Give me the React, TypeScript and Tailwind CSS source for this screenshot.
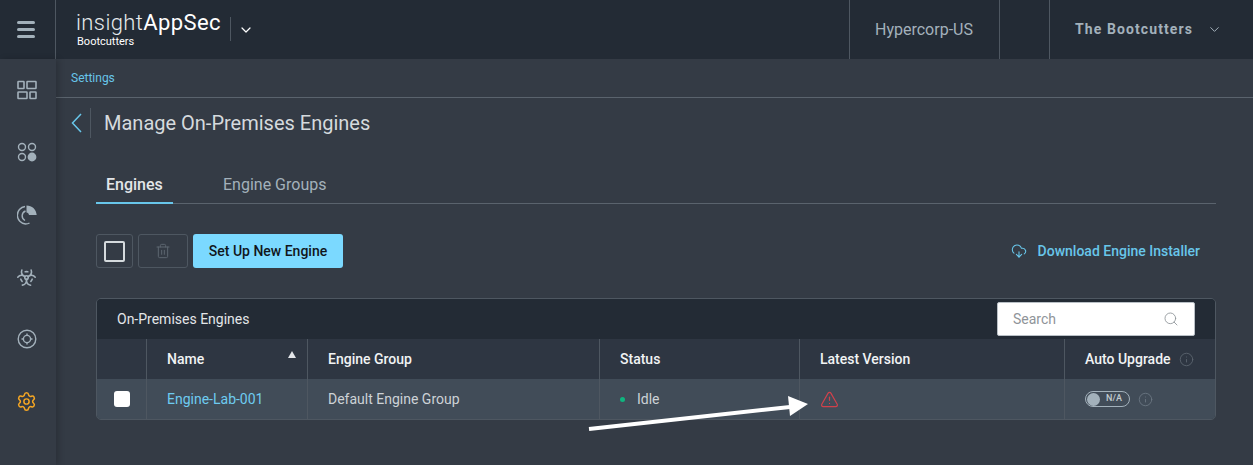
import { ChevronDown, Info, Search, Trash2, TriangleAlert, CloudDownload, Settings, Biohazard } from 'lucide-react';

const columnBorder = 'border-l border-[#4e5761]';

function DashboardIcon() {
  return (
    <svg width="20" height="20" viewBox="0 0 20 20" fill="none" stroke="#a3b1bb" strokeWidth="1.6">
      <rect x="1" y="1.5" width="6" height="7" rx="0.5" />
      <rect x="10" y="1.5" width="9" height="7" rx="0.5" />
      <rect x="1" y="12" width="9" height="6.5" rx="0.5" />
      <rect x="13" y="12" width="6" height="6.5" rx="0.5" />
    </svg>
  );
}

function DotsIcon() {
  return (
    <svg width="20" height="20" viewBox="0 0 20 20" fill="none" stroke="#a3b1bb" strokeWidth="1.4">
      <circle cx="5" cy="5" r="3.5" />
      <circle cx="15" cy="5" r="3.5" />
      <circle cx="5" cy="15" r="3.5" />
      <circle cx="15" cy="15" r="3.7" fill="#a3b1bb" />
    </svg>
  );
}

function RadarIcon() {
  return (
    <svg width="20" height="20" viewBox="0 0 20 20" fill="none" stroke="#a3b1bb" strokeWidth="1.4">
      <path d="M8 1.500a8.800 8.800 0 0 0 .5 17.500c1.500 0 3-.4 4-1" />
      <path d="M8.500 6a5.200 5.200 0 0 0-.5 9.500" />
      <path d="M9.500 0.500c5.500 0 9.700 3.800 10.200 9.500H12c-.3-1.300-1.100-2.200-2.500-2.500z" fill="#a3b1bb" stroke="none" />
    </svg>
  );
}

function TargetIcon() {
  return (
    <svg width="20" height="20" viewBox="0 0 20 20" fill="none" stroke="#a3b1bb" strokeWidth="1.4">
      <circle cx="10" cy="10" r="8.800" />
      <circle cx="10" cy="10" r="3.600" />
      <path d="M10 4.500v2M10 13.500v2M4.500 10h2M13.500 10h2" />
    </svg>
  );
}

function BackChevron() {
  return (
    <svg width="11" height="20" viewBox="0 0 11 20" fill="none" stroke="#68c6ea" strokeWidth="1.5">
      <path d="M10 1L1.500 10L10 19" />
    </svg>
  );
}

function SideIcon({ children }: { children: React.ReactNode }) {
  return <div className="h-[62.3px] flex items-center justify-center pr-[3px]">{children}</div>;
}

function Sidebar() {
  return (
    <aside className="w-[56px] shrink-0 bg-[#343b45] flex flex-col shadow-[3px_0_6px_rgba(0,0,0,0.18)] z-10">
      <SideIcon><DashboardIcon /></SideIcon>
      <SideIcon><DotsIcon /></SideIcon>
      <SideIcon><RadarIcon /></SideIcon>
      <SideIcon><Biohazard size={21} color="#a3b1bb" strokeWidth={1.8} /></SideIcon>
      <SideIcon><TargetIcon /></SideIcon>
      <SideIcon><Settings size={21} color="#f5a623" strokeWidth={1.7} /></SideIcon>
    </aside>
  );
}

function TopBar() {
  return (
    <header className="h-[59px] bg-[#232b35] flex items-stretch">
      <div className="w-[56px] shrink-0 border-r border-[#4e5761] flex flex-col items-center justify-center gap-[4px] pr-[3px]">
        <span className="w-[18px] h-[3px] rounded-sm bg-[#a3b1bb]" />
        <span className="w-[18px] h-[3px] rounded-sm bg-[#a3b1bb]" />
        <span className="w-[18px] h-[3px] rounded-sm bg-[#a3b1bb]" />
      </div>
      <div className="flex-1 flex items-center pl-[20px]">
        <div className="w-[154px] -mt-[2px]">
          <div className="text-[22px] leading-[26px] tracking-[0.4px] text-[#e6eaed] font-light">
            insight<span className="font-normal text-white">AppSec</span>
          </div>
          <div className="text-[11px] leading-[12px] pl-[1px] text-white">Bootcutters</div>
        </div>
        <div className="w-px h-[24px] bg-[#4e5761] -mt-[2px]" />
        <ChevronDown size={16} color="#fff" strokeWidth={1.8} className="ml-[7px]" />
      </div>
      <div className="w-[150px] border-l border-[#4e5761] flex items-center pl-[25px] text-[16px] text-[#a3b1bb]">Hypercorp-US</div>
      <div className="w-[50px] border-l border-[#4e5761]" />
      <div className="w-[204px] border-l border-[#4e5761] flex items-center pl-[25px] text-[#a3b1bb]">
        <span className="text-[14px] font-bold tracking-[1.1px]">The Bootcutters</span>
        <ChevronDown size={15} strokeWidth={1.6} className="ml-[14px]" />
      </div>
    </header>
  );
}

function Toolbar() {
  return (
    <div className="mt-[30px] flex items-center h-[34px]">
      <div className="w-[37px] h-[34px] rounded-[3px] border border-[#4e5761] flex items-center justify-center">
        <span className="w-[21px] h-[21px] rounded-[2px] border-2 border-[#d5dadd]" />
      </div>
      <div className="ml-[5px] w-[50px] h-[34px] rounded-[3px] border border-[#4e5761] flex items-center justify-center">
        <Trash2 size={16} color="#5d6670" strokeWidth={1.5} />
      </div>
      <button className="ml-[5px] w-[150px] h-[34px] rounded-[3px] bg-[#7bd9ff] text-[#11161c] text-[14px] font-medium">
        Set Up New Engine
      </button>
      <div className="ml-auto mr-[16px] flex items-center text-[14px] font-medium text-[#68c6ea]">
        <CloudDownload size={16} strokeWidth={1.6} />
        <span className="ml-[11px]">Download Engine Installer</span>
      </div>
    </div>
  );
}

function EnginesTable() {
  return (
    <div className="mt-[30px] rounded-[5px] border border-[#4e5761] overflow-hidden text-[14px]">
      <div className="h-[40px] bg-[#232b35] flex items-center pl-[20px] pr-[20px] justify-between text-[#e3e6e9]">
        <span>On-Premises Engines</span>
        <div className="w-[198px] h-[34px] -mt-[1px] bg-white rounded-[2px] border border-[#b9c0c6] flex items-center justify-between pl-[15px] pr-[15px] text-[#8f9499]">
          <span className="pt-[1px]">Search</span>
          <Search size={16} strokeWidth={1.3} color="#8f9499" />
        </div>
      </div>
      <div className="grid grid-cols-[49px_161px_292px_200px_265px_1fr]">
        <div className="h-[40px] bg-[#2e3642]" />
        <div className={`h-[40px] bg-[#2e3642] ${columnBorder} pl-[20px] flex items-center font-medium text-[#f1f3f4] relative`}>
          Name
          <span className="absolute right-[11px] top-[12px] w-0 h-0 border-x-[4px] border-x-transparent border-b-[7px] border-b-[#e3e6e9]" />
        </div>
        <div className={`h-[40px] bg-[#2e3642] ${columnBorder} pl-[20px] flex items-center font-medium text-[#f1f3f4]`}>Engine Group</div>
        <div className={`h-[40px] bg-[#2e3642] ${columnBorder} pl-[20px] flex items-center font-medium text-[#f1f3f4]`}>Status</div>
        <div className={`h-[40px] bg-[#2e3642] ${columnBorder} pl-[20px] flex items-center font-medium text-[#f1f3f4]`}>Latest Version</div>
        <div className={`h-[40px] bg-[#2e3642] ${columnBorder} pl-[20px] flex items-center font-medium text-[#f1f3f4]`}>
          Auto Upgrade
          <Info size={15} color="#5d6670" strokeWidth={1.4} className="ml-[8px]" />
        </div>

        <div className="h-[40px] bg-[#414c58] flex items-center justify-center pl-[1px]">
          <span className="w-[16px] h-[16px] rounded-[3px] bg-white" />
        </div>
        <div className={`h-[40px] bg-[#414c58] ${columnBorder} pl-[20px] flex items-center text-[#6ecbf0]`}>Engine-Lab-001</div>
        <div className={`h-[40px] bg-[#414c58] ${columnBorder} pl-[20px] flex items-center text-[#cdd2d6]`}>Default Engine Group</div>
        <div className={`h-[40px] bg-[#414c58] ${columnBorder} pl-[20px] flex items-center text-[#cdd2d6]`}>
          <span className="w-[5px] h-[5px] rounded-full bg-[#0fb57f]" />
          <span className="ml-[12px]">Idle</span>
        </div>
        <div className={`h-[40px] bg-[#414c58] ${columnBorder} pl-[20px] flex items-center`}>
          <TriangleAlert size={19} color="#d0414b" strokeWidth={1.5} />
        </div>
        <div className={`h-[40px] bg-[#414c58] ${columnBorder} pl-[20px] flex items-center`}>
          <div className="w-[45px] h-[16px] rounded-full border border-[#a3b1bb] flex items-center pl-[1px]">
            <span className="w-[13px] h-[13px] rounded-full bg-[#a3b1bb]" />
            <span className="ml-[6px] text-[9px] font-medium text-[#c2cbd1]">N/A</span>
          </div>
          <Info size={15} color="#6b7782" strokeWidth={1.4} className="ml-[8px]" />
        </div>
      </div>
    </div>
  );
}

export default function App() {
  return (
    <div className="relative w-[1253px] h-[465px] overflow-hidden bg-[#343b45] font-['Roboto',sans-serif]">
      <TopBar />
      <div className="flex h-[406px]">
        <Sidebar />
        <main className="flex-1 min-w-0">
          <div className="h-[39px] border-b border-[#5a636d] flex items-center pl-[15px] text-[12px] text-[#68c6ea]">Settings</div>
          <div className="h-[50px] flex items-center pl-[15px]">
            <BackChevron />
            <div className="ml-[8px] w-px h-[30px] bg-[#4e5761]" />
            <h1 className="ml-[13px] text-[20px] text-[#d5dadd]">Manage On-Premises Engines</h1>
          </div>
          <div className="ml-[40px] mr-[37px]">
            <div className="h-[56px] flex items-end border-b border-[#5a636d] text-[16px]">
              <div className="w-[77px] h-[36px] flex items-center pl-[10px] font-medium text-[#e3e6e9] border-b-2 border-[#68c6ea] -mb-px">Engines</div>
              <div className="h-[36px] flex items-center ml-[50px] text-[#a3b1bb]">Engine Groups</div>
            </div>
            <Toolbar />
            <EnginesTable />
          </div>
        </main>
      </div>
      {/* annotation arrow over the screenshot */}
      <svg className="absolute left-0 top-0 pointer-events-none" width="1253" height="465">
        <path d="M589 429L790 407" stroke="#fff" strokeWidth="4" />
        <path d="M788 396L808 404L790 416z" fill="#fff" />
      </svg>
    </div>
  );
}
